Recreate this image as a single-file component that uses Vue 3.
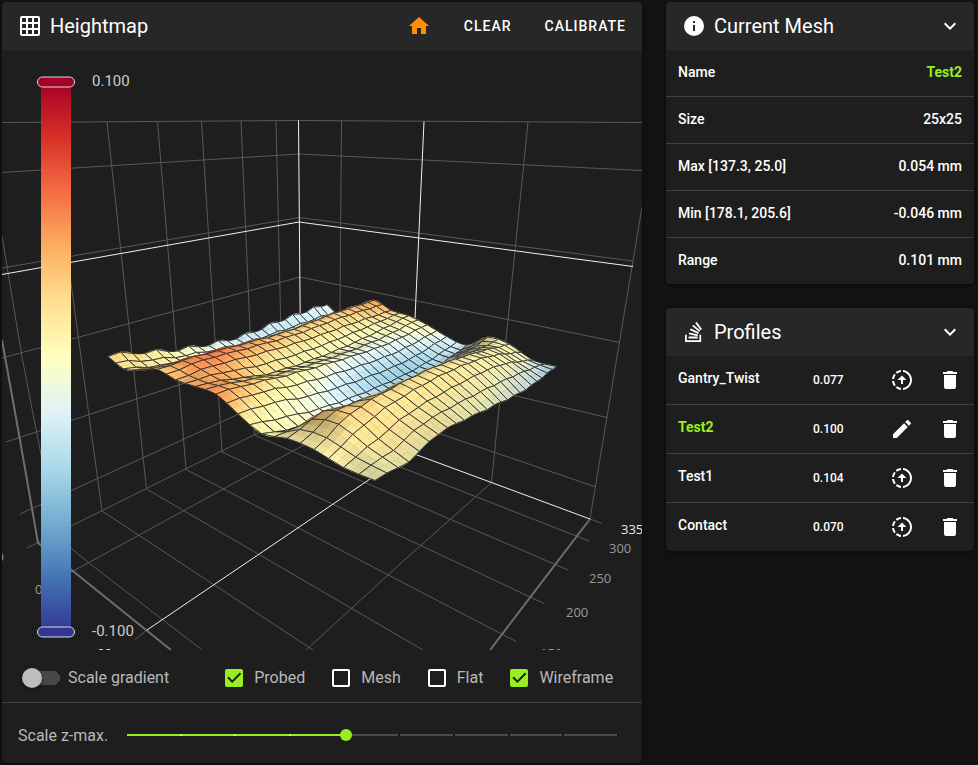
<script setup>
import { ref, computed } from 'vue'

const icons = {
  grid: 'M10,4V8H14V4H10M16,4V8H20V4H16M16,10V14H20V10H16M16,16V20H20V16H16M14,20V16H10V20H14M8,20V16H4V20H8M8,14V10H4V14H8M8,8V4H4V8H8M10,14H14V10H10V14M4,2H20A2,2 0 0,1 22,4V20A2,2 0 0,1 20,22H4C2.92,22 2,21.1 2,20V4A2,2 0 0,1 4,2Z',
  home: 'M10,20V14H14V20H19V12H22L12,3L2,12H5V20H10Z',
  info: 'M13,9H11V7H13M13,17H11V11H13M12,2A10,10 0 0,0 2,12A10,10 0 0,0 12,22A10,10 0 0,0 22,12A10,10 0 0,0 12,2Z',
  chevron: 'M7.41,8.58L12,13.17L16.59,8.58L18,10L12,16L6,10L7.41,8.58Z',
  trash: 'M19,4H15.5L14.5,3H9.5L8.5,4H5V6H19M6,19A2,2 0 0,0 8,21H16A2,2 0 0,0 18,19V7H6V19Z',
  pencil: 'M20.71,7.04C21.1,6.65 21.1,6 20.71,5.63L18.37,3.29C18,2.9 17.35,2.9 16.96,3.29L15.12,5.12L18.87,8.87M3,17.25V21H6.75L17.81,9.93L14.06,6.18L3,17.25Z',
  upload: 'M13,2.03V2.05L13,4.05C17.39,4.59 20.5,8.58 19.96,12.97C19.5,16.61 16.64,19.5 13,19.93V21.93C18.5,21.38 22.5,16.5 21.95,11C21.5,6.25 17.73,2.5 13,2.03M11,2.06C9.05,2.25 7.19,3 5.67,4.26L7.1,5.74C8.22,4.84 9.57,4.26 11,4.06V2.06M4.26,5.67C3,7.19 2.25,9.04 2.05,11H4.05C4.24,9.58 4.8,8.23 5.69,7.1L4.26,5.67M2.06,13C2.26,14.96 3.03,16.81 4.27,18.33L5.69,16.9C4.81,15.77 4.24,14.42 4.06,13H2.06M7.1,18.37L5.67,19.74C7.18,21 9.04,21.79 11,22V20C9.58,19.82 8.23,19.25 7.1,18.37M12,7.5L7.5,12H11V16H13V12H16.5L12,7.5Z',
  stack: 'M17.36,20.2V14.82H19.15V22H3V14.82H4.8V20.2H17.36M6.77,14.32L7.14,12.56L15.93,14.41L15.56,16.17L6.77,14.32M7.93,10.11L8.69,8.5L16.83,12.28L16.07,13.9L7.93,10.11M10.19,6.12L11.34,4.74L18.24,10.5L17.09,11.87L10.19,6.12M14.64,1.87L20,9.08L18.56,10.15L13.2,2.94L14.64,1.87M6.59,18.41V16.61H15.57V18.41H6.59Z',
}

const meshRows = [
  { label: 'Name', value: 'Test2', active: true },
  { label: 'Size', value: '25x25' },
  { label: 'Max [137.3, 25.0]', value: '0.054 mm' },
  { label: 'Min [178.1, 205.6]', value: '-0.046 mm' },
  { label: 'Range', value: '0.101 mm' },
]

const profiles = [
  { name: 'Gantry_Twist', range: '0.077' },
  { name: 'Test2', range: '0.100', active: true },
  { name: 'Test1', range: '0.104' },
  { name: 'Contact', range: '0.070' },
]

const scaleGradient = ref(false)
const layers = ref([
  { name: 'Probed', on: true },
  { name: 'Mesh', on: false },
  { name: 'Flat', on: false },
  { name: 'Wireframe', on: true },
])
const zMax = ref(4)

/* Colour scale, highest value first */
const scale = ['#a50026', '#d73027', '#f46d43', '#fdae61', '#fee090', '#ffffbf', '#e0f3f8', '#abd9e9', '#74add1', '#4575b4', '#313695']
const rgb = scale.map((c) => [1, 3, 5].map((i) => parseInt(c.slice(i, i + 2), 16)))

function colorAt(value, light) {
  const t = Math.min(9.999, Math.max(0, 5 - value * 2.3))
  const i = Math.floor(t)
  const f = t - i
  const c = rgb[i].map((a, k) => Math.min(255, Math.round((a + (rgb[i + 1][k] - a) * f) * light)))
  return `rgb(${c.join(',')})`
}

/* Cubic Hermite interpolation over uneven knots */
function spline(xs, ys, x) {
  const n = xs.length
  let i = 0
  while (i < n - 2 && x > xs[i + 1]) i++
  const slope = (k) => {
    const a = Math.max(0, k - 1)
    const b = Math.min(n - 1, k + 1)
    return (ys[b] - ys[a]) / (xs[b] - xs[a])
  }
  const h = xs[i + 1] - xs[i]
  const t = (x - xs[i]) / h
  const t2 = t * t
  const t3 = t2 * t
  return (2 * t3 - 3 * t2 + 1) * ys[i] + (t3 - 2 * t2 + t) * h * slope(i) + (3 * t2 - 2 * t3) * ys[i + 1] + (t3 - t2) * h * slope(i + 1)
}

/* Probed heights along the bed, one row per depth */
const depthKnots = [0, 3, 6, 12, 18, 24]
const widthKnots = [0, 2, 4, 6, 8, 10, 12, 14, 16, 18, 20, 22, 24]
const heights = [
  [5, -2, 3, 11, 9, 11, 12, 3, -5, 0, 1, -2, -1],
  [-1, -8, 1, 14, 12, 7, 10, 1, -12, 9, 15, 5, -3],
  [-7, -11, 1, 14, 11, 1, 7, -5, -16, 3, 20, 12, 4],
  [-10, -14, 0, 15, 11, 1, 4, -9, -18, -2, 23, 15, 0],
  [-1, -13, 3, 22, 15, 7, 4, -8, -14, 2, 19, 13, -4],
  [6, -8, 10, 26, 18, 17, 11, 2, -3, 13, 11, 0, 0],
]
const toneDepth = [0, 3, 6, 12, 18, 24]
const toneWidth = [0, 3, 6, 9, 12, 15, 18, 21, 24]
const tones = [
  [0.6, 0.35, 0.6, 0.85, 1.05, 0.3, 0.15, 0.15, 0],
  [0.4, 0.3, 1.1, 0.9, 0.6, 0, 0.6, 0.45, 0.1],
  [0, 0.2, 1.1, 0.5, 0.25, -0.25, 0.6, 0.4, 0.15],
  [-0.55, -0.45, 0.6, 0.2, -0.25, -0.85, 0.2, 0.35, -0.1],
  [-0.55, -0.6, 0.6, 0.15, -0.3, -0.95, -0.1, 0.2, -0.4],
  [-0.45, -0.3, 0.9, 0.4, 0.1, -0.5, 0.1, 0, -0.8],
]

const sample = (xs, zs, table, u, v) => spline(zs, table.map((row) => spline(xs, row, u)), v)
/* Probing noise, strongest at the left edge */
const ripple = (u, v) => Math.sin(v * 2.1 + u * 0.5 - 0.8) * (0.6 + 1.5 * Math.exp(-u))
const heightAt = (u, v) => sample(widthKnots, depthKnots, heights, u, v) + ripple(u, v)

function project(u, v) {
  const a = u / 24
  const b = v / 24
  const w = 1 - 0.321 * a + 0.415 * b
  const x = (108 + 146.6 * a + 354.7 * b) / w
  const y = (360 - 35.4 * a + 75.8 * b - heightAt(u, v)) / w
  return [x, y]
}
const pt = (p) => `${p[0].toFixed(1)},${p[1].toFixed(1)}`

const cells = computed(() => {
  const out = []
  for (let v = 23; v >= 0; v--) {
    for (let u = 0; u < 24; u++) {
      const faces = []
      for (const dv of [0.5, 0]) {
        for (const du of [0, 0.5]) {
          const x = u + du
          const z = v + dv
          const across = heightAt(x + 0.5, z) - heightAt(x, z)
          const along = heightAt(x, z + 0.5) - heightAt(x, z)
          const rim = 1 - 0.05 * Math.max(0, x - 21)
          const light = Math.max(0.6, Math.min(1.03, 1 - across * 0.08 - along * 0.06)) * rim
          faces.push({
            points: [[x, z], [x + 0.5, z], [x + 0.5, z + 0.5], [x, z + 0.5]].map((q) => pt(project(...q))).join(' '),
            fill: colorAt(sample(toneWidth, toneDepth, tones, x + 0.25, z + 0.25), light),
          })
        }
      }
      const outline = [[u, v], [u + 1, v], [u + 1, v + 1], [u, v + 1]].map((q) => pt(project(...q))).join(' ')
      out.push({ key: `${u}-${v}`, faces, outline })
    }
  }
  return out
})

const gridLines = [
  // wall courses
  'M2,122.5L299,120.5L642,122.5', 'M2,172.5L299,154L642,170.5', 'M2,268L299,217.5L633,261',
  'M2,358L300,277L620,342.5', 'M6,442L300,345L607,417.5', 'M20,514L300,386L596,487', 'M27,548L300,412',
  // left wall uprights
  'M2,236L22,357L57,537', 'M49,122L102,511', 'M107,122L146.500,489', 'M157.500,121.500L186,469.500',
  'M201.500,121L222,452', 'M241,121L254.500,435', 'M276,121L283,421',
  // right wall uprights
  'M341.500,121L339,430', 'M528,122L491.500,482.500', 'M642,207L590,519',
  // floor
  'M57,537L89,563L201.500,649.500', 'M102,511L313,650', 'M146.500,489L423,650', 'M186,469.500L516,641.500',
  'M222,452L544,603.500', 'M254.500,435L568,570', 'M283,421L589,541', 'M590,519L602,523.500',
  'M66,575L313,440L341,424', 'M306,650L400,564L491.500,482.500', 'M135,639.500L147,630',
]
const axisLines = ['M2,340L20,440L38,543L171,650', 'M590,519L490,650']
const brightLines = ['M2,274.500L299,222L633,266.500', 'M298.500,120.500L301,412L590,519', 'M424,121.500L409,450', 'M376,475L147,630']

const ticks = [
  { x: 621, y: 534, text: '335', strong: true },
  { x: 609, y: 553, text: '300' },
  { x: 589, y: 583, text: '250' },
  { x: 566, y: 617, text: '200' },
  { x: 540, y: 658, text: '150' },
  { x: 35, y: 594, text: '0' },
  { x: -15, y: 562, text: '-99' },
  { x: 93, y: 658, text: '-99', strong: true },
]
</script>

<template>
  <main class="page">
    <section class="card">
      <header class="head">
        <svg class="icon" viewBox="0 0 24 24" aria-hidden="true"><path :d="icons.grid" /></svg>
        <h2>Heightmap</h2>
        <div class="actions">
          <button class="bare home" type="button" aria-label="Home"><svg class="icon" viewBox="0 0 24 24"><path :d="icons.home" /></svg></button>
          <button class="bare text" type="button">CLEAR</button>
          <button class="bare text" type="button">CALIBRATE</button>
        </div>
      </header>

      <svg class="chart" viewBox="2 50 640 600">
        <defs>
          <linearGradient id="scale" x1="0" y1="0" x2="0" y2="1">
            <stop v-for="(c, i) in scale" :key="c" :offset="i / 10" :stop-color="c" />
          </linearGradient>
        </defs>
        <g fill="none">
          <path v-for="d in gridLines" :key="d" :d="d" class="line" />
          <path v-for="d in axisLines" :key="d" :d="d" class="axis" />
          <path v-for="d in brightLines" :key="d" :d="d" class="bright" />
        </g>
        <g v-if="layers[0].on">
          <g v-for="c in cells" :key="c.key">
            <polygon v-for="(f, i) in c.faces" :key="i" :points="f.points" :fill="f.fill" :stroke="f.fill" stroke-width="0.500" />
            <polygon v-if="layers[3].on" :points="c.outline" class="wire" />
          </g>
        </g>
        <text v-for="t in ticks" :key="t.x" :x="t.x" :y="t.y" class="tick" :class="{ strong: t.strong }">{{ t.text }}</text>
        <rect x="41" y="82" width="30" height="550" fill="url(#scale)" />
        <rect x="37.500" y="77" width="37" height="10" rx="5" fill="#a50026" class="handle" />
        <rect x="37.500" y="627" width="37" height="10" rx="5" fill="#313695" class="handle" />
        <text x="92" y="86" class="bound">0.100</text>
        <text x="92" y="636" class="bound">-0.100</text>
      </svg>

      <div class="options">
        <label class="option">
          <input v-model="scaleGradient" class="switch" type="checkbox" />
          Scale gradient
        </label>
        <div class="layers">
          <label v-for="l in layers" :key="l.name" class="option wide">
            <input v-model="l.on" class="check" type="checkbox" />
            {{ l.name }}
          </label>
        </div>
      </div>

      <div class="zrow">
        <label for="zmax">Scale z-max.</label>
        <div class="slider">
          <div class="track">
            <span v-for="n in 9" :key="n" :class="{ filled: n <= zMax }"></span>
          </div>
          <input id="zmax" v-model.number="zMax" type="range" min="0" max="9" step="1" />
        </div>
      </div>
    </section>

    <div class="side">
      <section class="card">
        <header class="head">
          <svg class="icon" viewBox="0 0 24 24" aria-hidden="true"><path :d="icons.info" /></svg>
          <h2>Current Mesh</h2>
          <div class="actions">
            <button class="bare" type="button" aria-label="Collapse current mesh"><svg class="icon" viewBox="0 0 24 24"><path :d="icons.chevron" /></svg></button>
          </div>
        </header>
        <table class="mesh">
          <tbody>
            <tr v-for="r in meshRows" :key="r.label">
              <th scope="row">{{ r.label }}</th>
              <td :class="{ active: r.active }">{{ r.value }}</td>
            </tr>
          </tbody>
        </table>
      </section>

      <section class="card">
        <header class="head">
          <svg class="icon" viewBox="0 0 24 24" aria-hidden="true"><path :d="icons.stack" /></svg>
          <h2>Profiles</h2>
          <div class="actions">
            <button class="bare" type="button" aria-label="Collapse profiles"><svg class="icon" viewBox="0 0 24 24"><path :d="icons.chevron" /></svg></button>
          </div>
        </header>
        <table class="profiles">
          <tbody>
            <tr v-for="p in profiles" :key="p.name">
              <th scope="row" :class="{ active: p.active }">{{ p.name }}</th>
              <td class="range">{{ p.range }}</td>
              <td class="tools">
                <div>
                  <button class="bare" type="button" :aria-label="p.active ? 'Rename' : 'Load'"><svg class="icon" viewBox="0 0 24 24"><path :d="p.active ? icons.pencil : icons.upload" /></svg></button>
                  <button class="bare" type="button" aria-label="Delete"><svg class="icon" viewBox="0 0 24 24"><path :d="icons.trash" /></svg></button>
                </div>
              </td>
            </tr>
          </tbody>
        </table>
      </section>
    </div>
  </main>
</template>

<style>
body {
  margin: 0;
  background: #121212;
}
</style>

<style scoped>
.page {
  display: grid;
  grid-template-columns: minmax(0, 640fr) minmax(0, 308fr);
  gap: 24px;
  align-items: start;
  padding: 2px 4px 2px 2px;
  font-family: Roboto, "Liberation Sans", sans-serif;
  color: #fff;
}
.side {
  display: grid;
  gap: 24px;
}
.card {
  background: #1e1e1e;
  border-radius: 4px;
  overflow: hidden;
  box-shadow: 0 1px 3px rgba(0, 0, 0, 0.5);
}
.head {
  display: flex;
  align-items: center;
  gap: 8px;
  height: 48px;
  padding: 0 16px;
  background: #272727;
}
.side .head {
  padding: 0 12px 0 16px;
}
h2 {
  margin: 0;
  font-size: 20px;
  font-weight: 400;
  line-height: 24px;
}
.icon {
  display: block;
  width: 24px;
  height: 24px;
  fill: currentColor;
}
.actions {
  display: flex;
  align-items: center;
  gap: 33px;
  margin-left: auto;
}
.bare {
  padding: 0;
  border: 0;
  background: none;
  color: inherit;
  font: inherit;
  cursor: pointer;
}
.home {
  color: #ff8f00;
}
.text {
  font-size: 14px;
  font-weight: 500;
  letter-spacing: 1px;
}
.chart {
  display: block;
  width: 100%;
}
.line {
  stroke: #595959;
}
.axis {
  stroke: #6e6e6e;
  stroke-width: 2px;
}
.bright {
  stroke: #f0f0f0;
}
.wire {
  fill: none;
  stroke: #2a2a2a;
  stroke-opacity: 0.9;
}
.tick {
  font: 13px "Open Sans", sans-serif;
  fill: #999;
}
.tick.strong {
  fill: #e8e8e8;
}
.bound {
  font: 15px Roboto, sans-serif;
  fill: #ccc;
}
.handle {
  stroke: #dcdcdc;
}
.options {
  display: flex;
  align-items: center;
  gap: 56px;
  height: 48px;
  padding: 4px 20px 0;
  border-bottom: 1px solid #414141;
}
.layers {
  display: flex;
  gap: 27px;
}
.option {
  display: flex;
  align-items: center;
  gap: 8px;
  font-size: 16px;
  line-height: 24px;
  color: #b9b9b9;
  white-space: nowrap;
}
.option.wide {
  gap: 11px;
}
.option input {
  appearance: none;
  flex: none;
  margin: 0;
}
.switch {
  display: flex;
  align-items: center;
  width: 38px;
  height: 20px;
  background: linear-gradient(#484848, #484848) 5px center / 26px 14px no-repeat,
    radial-gradient(circle at 31px 10px, #484848 7px, transparent 7px);
}
.switch::before {
  content: "";
  width: 20px;
  height: 20px;
  border-radius: 50%;
  background: #bdbdbd;
  box-shadow: 0 2px 4px rgba(0, 0, 0, 0.4);
}
.switch:checked::before {
  margin-left: 18px;
  background: #98ee21;
}
.check {
  box-sizing: border-box;
  width: 18px;
  height: 18px;
  border: 2px solid #fff;
  border-radius: 2px;
}
.check:checked {
  border: 0;
  background: #98ee21;
}
.check:checked::before {
  content: "";
  display: block;
  width: 18px;
  height: 18px;
  background: #1e1e1e;
  clip-path: polygon(7px 14px, 2px 9px, 3.41px 7.58px, 7px 11.17px, 14.59px 3.58px, 16px 5px);
}
.zrow {
  display: flex;
  align-items: center;
  gap: 19px;
  height: 60px;
  padding: 4px 23px 0 16px;
  box-sizing: border-box;
  font-size: 16px;
  color: #b9b9b9;
}
.slider {
  position: relative;
  flex: 1;
}
.track {
  display: flex;
}
.track span {
  flex: 1;
  height: 2px;
  background: #4b4b4b;
  border-right: 2px solid #141414;
}
.track .filled {
  background: #98ee21;
  border-color: #c9f68c;
}
.slider input {
  position: absolute;
  inset: -5px -6px;
  width: calc(100% + 12px);
  height: 12px;
  margin: 0;
  appearance: none;
  background: none;
}
.slider input::-webkit-slider-thumb {
  appearance: none;
  width: 12px;
  height: 12px;
  border-radius: 50%;
  background: #98ee21;
}
table {
  width: 100%;
  border-collapse: separate;
  border-spacing: 0;
  font-size: 14px;
  line-height: 20px;
}
th,
td {
  padding: 0 12px;
  font-weight: 500;
  text-align: left;
  border-bottom: 1px solid #414141;
}
tr:last-child > * {
  border-bottom: 0;
}
.mesh th,
.mesh td {
  padding: 12px 12px 14px;
}
.mesh td {
  text-align: right;
}
.profiles th {
  width: 123px;
  padding: 12px 12px 16px;
}
.profiles .range {
  padding: 14px 0;
  font-size: 12px;
}
.tools > div {
  display: flex;
  justify-content: flex-end;
  gap: 24px;
}
.mesh .active,
.profiles .active {
  color: #98ee21;
  font-weight: 700;
}
</style>
